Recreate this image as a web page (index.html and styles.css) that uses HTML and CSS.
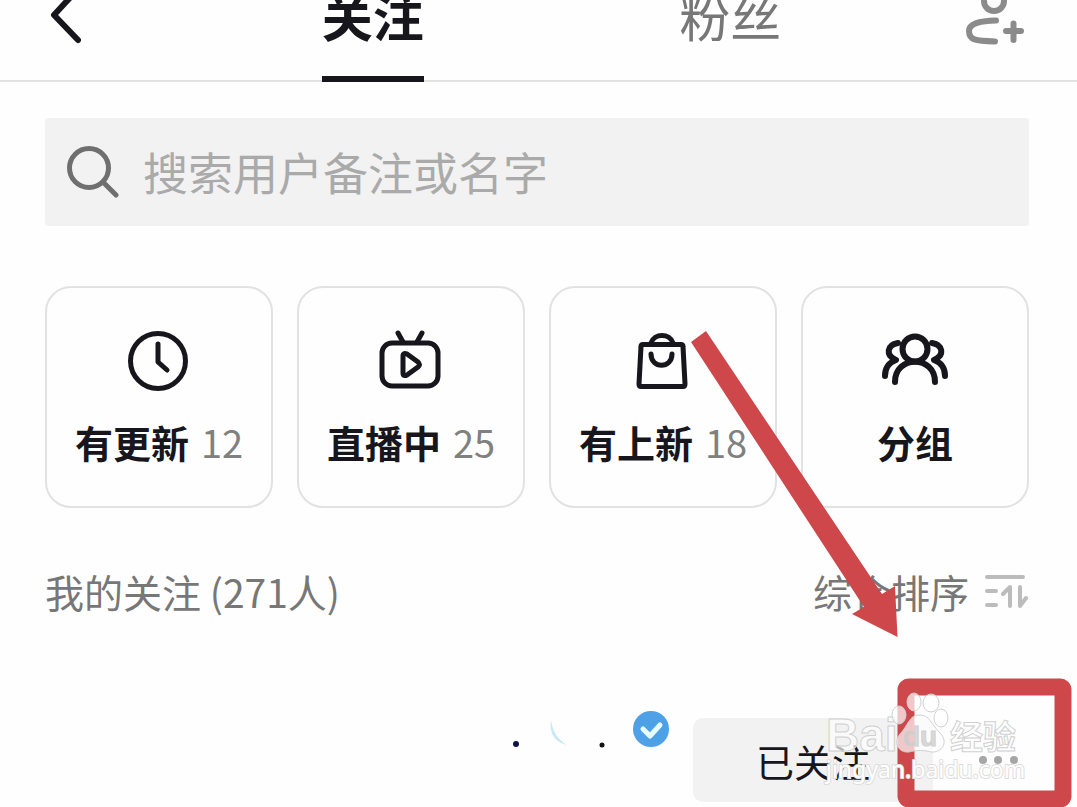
FILE: index.html
```html
<!DOCTYPE html>
<html lang="zh-CN">
<head>
<meta charset="utf-8">
<meta name="viewport" content="width=device-width, initial-scale=1">
<title>关注</title>
<link rel="stylesheet" href="styles.css">
</head>
<body>
<div class="page">
  <header class="topbar">
    <button class="icon-button back" aria-label="返回">
      <svg width="34" height="46" viewBox="0 0 34 46" fill="none" stroke="#16161c" stroke-width="6" stroke-linecap="round" stroke-linejoin="round"><path d="M28-11 4 15 28 40"/></svg>
    </button>
    <a class="tab active" href="#following" aria-current="page">关注</a>
    <a class="tab" href="#fans">粉丝</a>
    <button class="icon-button add" aria-label="添加朋友">
      <svg width="60" height="46" viewBox="0 0 60 46" fill="none" stroke="#8b8b8b" stroke-width="6" stroke-linecap="round"><circle cx="29" cy="1" r="10"/><path d="M31 20.500C13 21 4 24 4 31C4 40 10 41 30 41.500M41 31H56M48.500 23.500V40"/></svg>
    </button>
  </header>

  <main class="content">
    <label class="search">
      <svg width="54" height="54" viewBox="0 0 54 54" fill="none" stroke="#6f6f6f" stroke-width="5" stroke-linecap="round"><circle cx="24" cy="23" r="19.500"/><path d="M38 37 51 50"/></svg>
      <input type="search" aria-label="搜索用户" placeholder="搜索用户备注或名字">
    </label>

    <nav class="cards">
      <a class="card" href="#updates">
        <svg width="68" height="68" viewBox="0 0 68 68" fill="none" stroke="#16161c" stroke-width="5" stroke-linecap="round" stroke-linejoin="round"><circle cx="33" cy="34" r="27.500"/><path d="M33 17V35L42 43"/></svg>
        <span class="card-label"><b>有更新</b><span class="count">12</span></span>
      </a>
      <a class="card" href="#live">
        <svg width="68" height="68" viewBox="0 0 68 68" fill="none" stroke="#16161c" stroke-width="5" stroke-linecap="round" stroke-linejoin="round"><rect x="5" y="16" width="56" height="43" rx="10"/><path d="M21 6 26 15M45 6 40 15M26 29C26 26 28 26 30 27L41 35C43 37 43 38 41 40L30 48C28 49 26 49 26 46Z"/></svg>
        <span class="card-label"><b>直播中</b><span class="count">25</span></span>
      </a>
      <a class="card" href="#new">
        <svg width="68" height="68" viewBox="0 0 68 68" fill="none" stroke="#16161c" stroke-width="5" stroke-linecap="round" stroke-linejoin="round"><path d="M14 17.500H52Q54 17.500 54 19.500L56 57Q56 59.500 54 59.500H12Q10 59.500 10 57L12 19.500Q12 17.500 14 17.500ZM22 16C25 6 41 6 44 16M22 27C22 42 43 42 43 27"/></svg>
        <span class="card-label"><b>有上新</b><span class="count">18</span></span>
      </a>
      <a class="card" href="#groups">
        <svg width="68" height="68" viewBox="0 0 68 68" fill="none" stroke="#16161c" stroke-width="6" stroke-linecap="round" stroke-linejoin="round"><circle cx="34" cy="22" r="12.500"/><path d="M14 55C14 28 54 28 54 55M17 16C6 18 4 28 15 33Q4 37 4 49M51 16C62 18 64 28 53 33Q64 37 64 49"/></svg>
        <span class="card-label"><b>分组</b></span>
      </a>
    </nav>

    <div class="list-head">
      <h2 class="list-title">我的关注 (271人)</h2>
      <button class="sort">综合排序
        <svg width="44" height="38" viewBox="0 0 44 38" fill="none" stroke="#bcbcbc" stroke-width="4" stroke-linecap="round" stroke-linejoin="round"><path d="M2 5H38M2 19H11M2 33H11M18 22 25 15V34M35 15V34L41 26"/></svg>
      </button>
    </div>

    <div class="user">
      <svg class="name" width="98" height="40" viewBox="0 0 98 40" aria-hidden="true"><circle cx="8" cy="33" r="3" fill="#10104c"/><circle cx="94" cy="34" r="2.500" fill="#111"/><path d="M43 9Q40 29 59 34Q45 26 43 9Z" fill="#c4e8f4"/></svg>
      <svg class="badge" width="38" height="38" viewBox="0 0 38 38" role="img" aria-label="已认证"><circle cx="18" cy="18" r="18" fill="#4ea1e6"/><path d="M10 18 17 25 27 14" fill="none" stroke="#e8ffff" stroke-width="5" stroke-linecap="round" stroke-linejoin="round"/></svg>
      <button class="followed">已关注</button>
      <button class="more" aria-label="更多"><svg width="40" height="10" viewBox="0 0 40 10" fill="#a6a6a6"><circle cx="4" cy="5" r="4"/><circle cx="19" cy="5" r="4"/><circle cx="35" cy="5" r="4"/></svg></button>
    </div>
  </main>

  <svg class="overlay" width="400" height="480" viewBox="677 327 400 480" aria-hidden="true">
    <path d="M691 342 706 331 882 594 895 586 897.500 637 852 614 864 607Z" fill="#ce474b"/>
    <rect x="906" y="687" width="157" height="112" rx="3" fill="none" stroke="#ce474b" stroke-width="17" stroke-linejoin="round"/>
    <g class="watermark">
      <text class="brand" x="826" y="751">Bai</text>
      <ellipse cx="899" cy="715" rx="7" ry="9"/><ellipse cx="914" cy="702" rx="7" ry="9"/><ellipse cx="931" cy="703" rx="8" ry="9"/><ellipse cx="941" cy="718" rx="7" ry="9"/>
      <path d="M919 715C909 715 908 726 900 734C893 742 898 753 909 752C916 750 925 750 931 752C942 753 949 742 940 733C931 724 930 715 919 715Z"/>
      <text class="du" x="903" y="746">du</text>
      <text class="cn" x="950" y="749">经验</text>
      <text class="site" x="826" y="778">jingyan.baidu.com</text>
    </g>
  </svg>
</div>
</body>
</html>
```
FILE: styles.css
```css
* { box-sizing: border-box; }
body {
  margin: 0;
  background: #fefefe;
  color: #16161c;
  font-family: "Noto Sans CJK SC", sans-serif;
}
svg { display: block; flex: none; }
a { color: inherit; text-decoration: none; }
button {
  padding: 0;
  border: 0;
  background: none;
  color: inherit;
  font: inherit;
}
.page { position: relative; overflow: hidden; padding-bottom: 5px; }

.topbar {
  display: grid;
  grid-template-columns: 194px 1fr 1fr 168px;
  height: 82px;
  border-bottom: 2px solid #e2e2e2;
}
.icon-button { align-self: start; }
.back { padding-left: 50px; }
.add { padding-left: 56px; }
.tab {
  justify-self: center;
  height: 82px;
  font-size: 51px;
  line-height: 30px;
  color: #777;
}
.tab.active {
  border-bottom: 6px solid #16161c;
  color: #16161c;
  font-weight: 700;
}

.content { padding: 36px 48px 0 45px; }
.search {
  display: flex;
  align-items: center;
  gap: 24px;
  height: 108px;
  padding: 0 20px;
  border-radius: 4px;
  background: #f2f2f2;
}
.search input {
  flex: 1;
  min-width: 0;
  padding: 0;
  border: 0;
  outline: 0;
  background: none;
  font: inherit;
  font-size: 45px;
  line-height: 64px;
}
.search input::placeholder { color: #aaa; opacity: 1; }

.cards {
  display: grid;
  grid-template-columns: repeat(4, 1fr);
  gap: 24px;
  margin-top: 60px;
}
.card {
  display: flex;
  flex-direction: column;
  align-items: center;
  gap: 19px;
  height: 222px;
  padding-top: 39px;
  border: 2px solid #e2e2e2;
  border-radius: 26px;
}
.card-label {
  display: flex;
  gap: 12px;
  font-size: 38px;
  line-height: 56px;
  white-space: nowrap;
}
.count { color: #808080; }

.list-head {
  display: flex;
  align-items: center;
  justify-content: space-between;
  margin-top: 54px;
  color: #777;
  font-size: 39px;
  line-height: 58px;
}
.list-title { margin: 0; font-size: inherit; font-weight: 400; }
.sort { display: flex; align-items: center; gap: 16px; }

.user {
  display: flex;
  align-items: flex-start;
  margin-top: 91px;
}
.name { margin-left: auto; }
.badge { margin: 0 22px 0 27px; }
.followed {
  width: 240px;
  height: 84px;
  margin-top: 7px;
  border-radius: 10px;
  background: #f2f2f2;
  font-size: 38px;
}
.more {
  display: flex;
  align-items: center;
  justify-content: flex-end;
  width: 96px;
  height: 84px;
  margin-top: 7px;
  padding-right: 10px;
}

.overlay {
  position: absolute;
  top: 327px;
  right: 0;
  pointer-events: none;
}
.watermark {
  fill: #fff;
  fill-opacity: 0.7;
  stroke: #d0d0d0;
  stroke-width: 1px;
}
.brand { font: 700 46px "Liberation Sans", sans-serif; }
.du {
  font: 700 28px "Liberation Sans", sans-serif;
  fill: #c9c9c9;
}
.cn { font: 700 33px "Noto Sans CJK SC", sans-serif; }
.site {
  font: 400 23px "Noto Sans", sans-serif;
  fill-opacity: 1;
  stroke: #ddd;
  paint-order: stroke;
  stroke-width: 2px;
}
```
